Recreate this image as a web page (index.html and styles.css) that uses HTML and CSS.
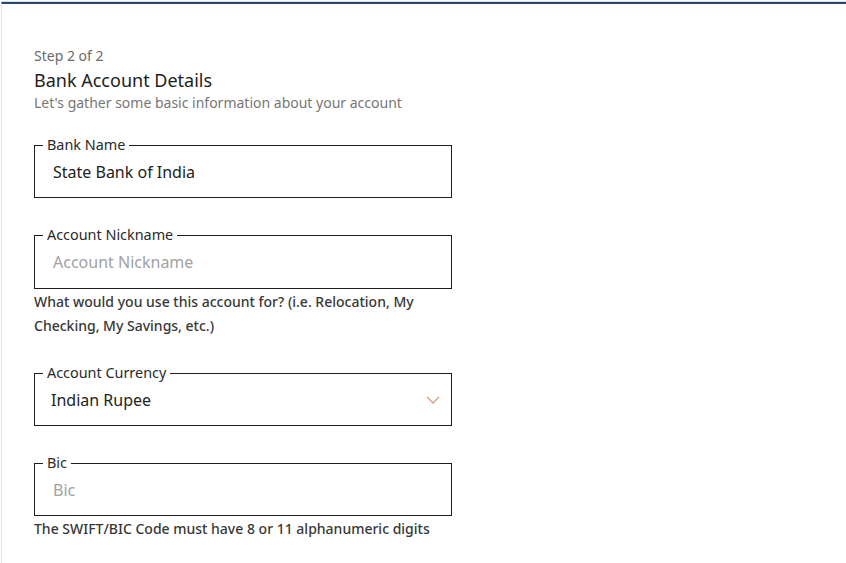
FILE: index.html
```html
<!DOCTYPE html>
<html lang="en">
<head>
<meta charset="utf-8">
<title>Bank Account Details</title>
<link rel="stylesheet" href="styles.css">
</head>
<body>
<div class="page">
  <div class="card">
    <div class="step">Step 2 of 2</div>
    <h1 class="title">Bank Account Details</h1>
    <p class="subtitle">Let's gather some basic information about your account</p>

    <fieldset class="field field-first">
      <legend class="legend">Bank Name</legend>
      <input class="input" type="text" value="State Bank of India">
    </fieldset>

    <fieldset class="field field-tall">
      <legend class="legend">Account Nickname</legend>
      <input class="input" type="text" placeholder="Account Nickname">
    </fieldset>
    <p class="helper">What would you use this account for? (i.e. Relocation, My Checking, My Savings, etc.)</p>

    <fieldset class="field field-after-helper">
      <legend class="legend">Account Currency</legend>
      <div class="select">
        <span class="select-value">Indian Rupee</span>
        <svg class="chevron" width="14" height="8" viewBox="0 0 14 8" aria-hidden="true">
          <path d="M1 1 L7 7 L13 1" fill="none" stroke="#d99a80" stroke-width="1.3"/>
        </svg>
      </div>
    </fieldset>

    <fieldset class="field">
      <legend class="legend">Bic</legend>
      <input class="input" type="text" placeholder="Bic">
    </fieldset>
    <p class="helper helper-last">The SWIFT/BIC Code must have 8 or 11 alphanumeric digits</p>
  </div>
</div>
</body>
</html>
```

FILE: styles.css
```css
html, body {
  margin: 0;
  padding: 0;
  background: #ffffff;
}

body {
  font-family: "Noto Sans", "Open Sans", sans-serif;
  color: #222222;
}

.page {
  padding-top: 2px;
  height: 561px;
  overflow: hidden;
}

.card {
  box-sizing: border-box;
  height: 100%;
  margin-left: 1px;
  border-top: 2px solid #27466b;
  box-shadow: 0 -1px 0 #cfe0f0;
  border-left: 1px solid #e2e2e2;
  padding: 42px 0 0 32px;
}

.step {
  font-size: 14px;
  line-height: 20px;
  color: #6b6b6b;
}

.title {
  margin: 2px 0 0;
  font-size: 18px;
  line-height: 24px;
  font-weight: 400;
  color: #1e1e1e;
}

.subtitle {
  margin: 1px 0 0;
  font-size: 14px;
  line-height: 20px;
  color: #777777;
}

.field {
  box-sizing: border-box;
  width: 418px;
  height: 63px;
  margin: 27px 0 0;
  padding: 5px 0 0 8px;
  border: 1px solid #1e1e1e;
  min-width: 0;
}

.field-first {
  margin-top: 22px;
}

.field-tall {
  height: 64px;
}

.field-after-helper {
  margin-top: 25px;
}

.legend {
  padding: 0 4px;
  font-size: 14.4px;
  line-height: 20px;
  color: #2a2a2a;
}

.input {
  display: block;
  box-sizing: border-box;
  width: 390px;
  height: 24px;
  margin: 0 0 0 10px;
  padding: 0;
  border: none;
  outline: none;
  background: transparent;
  font-family: "Noto Sans", "Open Sans", sans-serif;
  font-size: 16px;
  line-height: 24px;
  color: #222222;
}

.input::placeholder {
  color: #a2a2a2;
}

.select {
  display: flex;
  align-items: center;
  justify-content: space-between;
  height: 24px;
  margin-left: 8px;
  padding-right: 11px;
}

.select-value {
  font-size: 16px;
  line-height: 24px;
  color: #222222;
}

.chevron {
  display: block;
}

.helper {
  width: 420px;
  margin: 1px 0 0;
  font-size: 14px;
  line-height: 24px;
  font-weight: 500;
  color: #383838;
}
```
